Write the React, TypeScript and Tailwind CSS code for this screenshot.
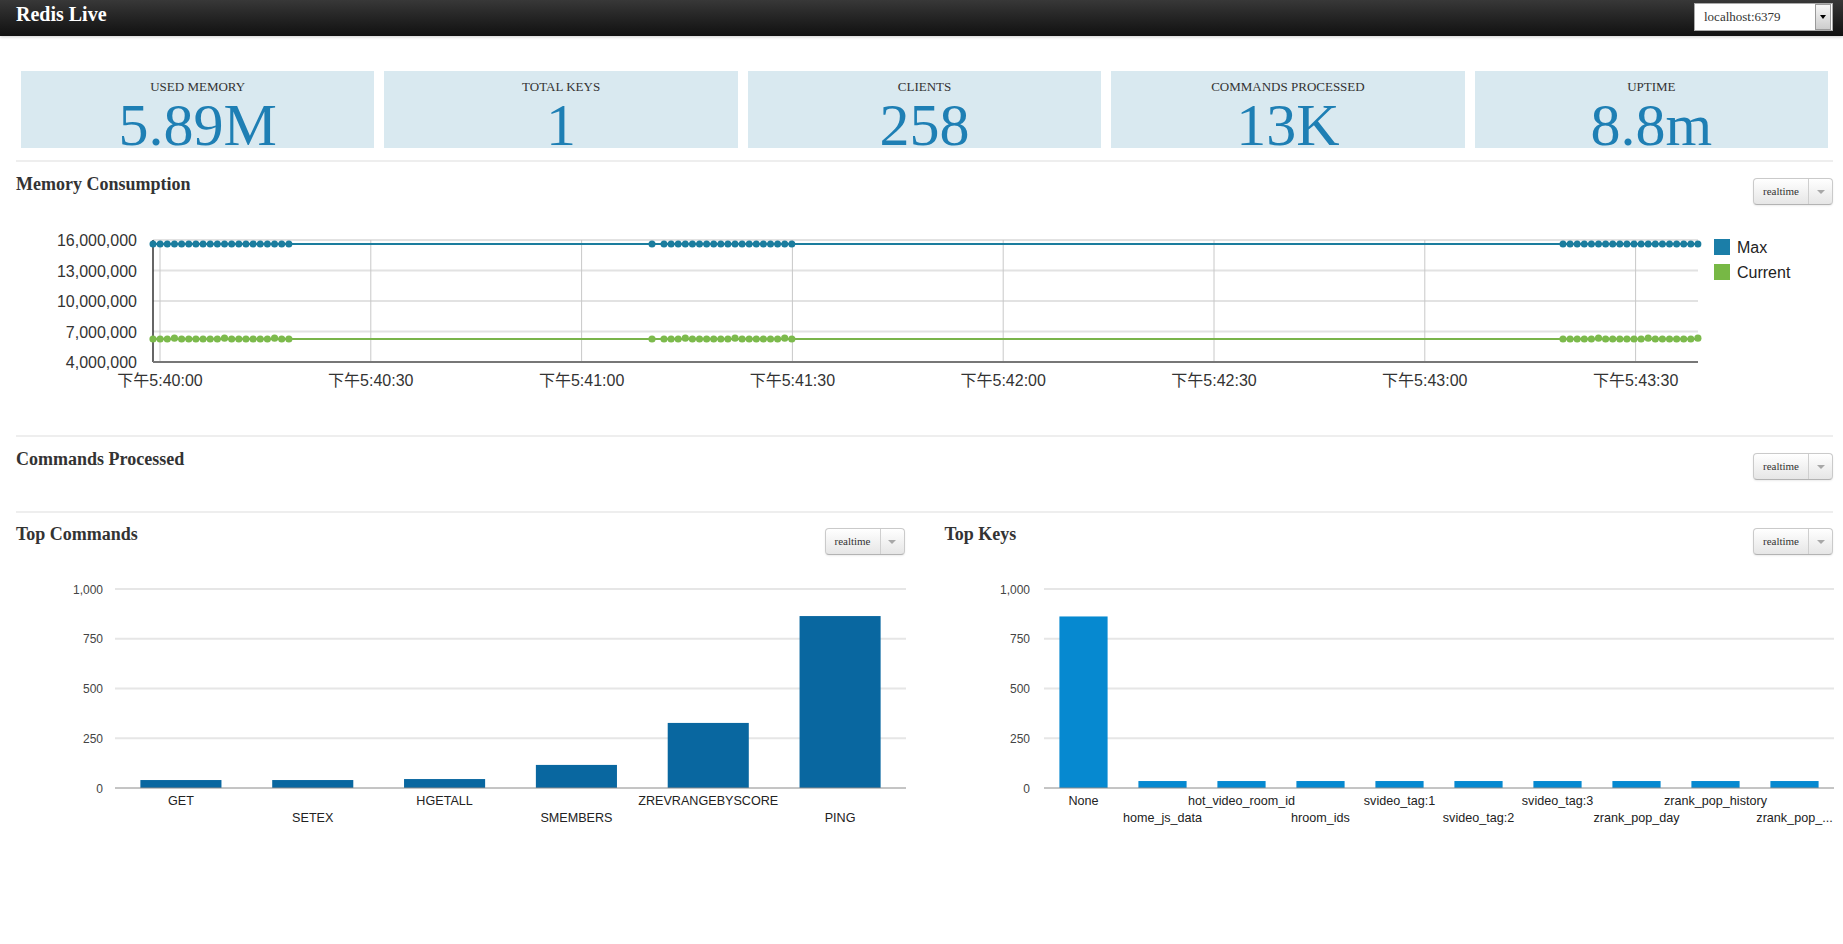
import React from "react";

function RealtimeBtn() {
  return (
    <div className="flex h-[27px] w-[80px] shrink-0 rounded-[4px] border border-[#cacaca] border-b-[#b3b3b3] bg-linear-to-b from-white to-[#e6e6e6] shadow-[0_1px_2px_rgba(0,0,0,0.08)]">
      <div className="flex w-[54px] items-center justify-center font-['Liberation_Serif',serif] text-[11px] text-[#333]">realtime</div>
      <div className="flex flex-1 items-center justify-center border-l border-[#cfcfcf]">
        <div className="h-0 w-0 border-x-[4px] border-t-[4px] border-x-transparent border-t-[#a8a8a8]" />
      </div>
    </div>
  );
}

function Stat({ label, value }: { label: string; value: string }) {
  return (
    <div className="flex h-[77px] flex-1 flex-col items-center bg-[#d9e9f0] pt-[8px]">
      <div className="text-[13px] leading-[15px] text-[#333]">{label}</div>
      <div className="mt-px text-[60px] leading-[60px] text-[#1e7fb4]">{value}</div>
    </div>
  );
}

function Rule() {
  return <div className="border-t-2 border-[#eeeeee]" />;
}

const SANS = "'Liberation Sans','Noto Sans CJK SC',sans-serif";

function LineChart() {
  const yTicks = [
    { y: 240, t: "16,000,000" },
    { y: 270.5, t: "13,000,000" },
    { y: 301, t: "10,000,000" },
    { y: 331.5, t: "7,000,000" },
    { y: 362, t: "4,000,000" },
  ];
  const xTicks = ["下午5:40:00", "下午5:40:30", "下午5:41:00", "下午5:41:30", "下午5:42:00", "下午5:42:30", "下午5:43:00", "下午5:43:30"];
  const dotsX: number[] = [];
  for (let i = 0; i < 20; i++) dotsX.push(153 + 7.15 * i);
  dotsX.push(652);
  for (let i = 0; i < 19; i++) dotsX.push(664 + 7.1 * i);
  for (let i = 0; i < 20; i++) dotsX.push(1563 + 7.1 * i);
  const curOff = (i: number) => (i % 7 === 3 ? -0.8 : 0);
  return (
    <svg width={1817} height={230} className="block overflow-visible">
      <g transform="translate(-16,-205)" fontFamily={SANS}>
        {yTicks.map((t) => (
          <g key={t.t}>
            <line x1={153} x2={1698} y1={t.y} y2={t.y} stroke="#e2e2e2" strokeWidth={2} />
            <text x={137} y={t.y + 6} textAnchor="end" fontSize={16} fill="#333">{t.t}</text>
          </g>
        ))}
        {xTicks.map((t, i) => {
          const x = 160 + 210.8 * i;
          return (
            <g key={t}>
              <line x1={x} x2={x} y1={240} y2={362} stroke="#c8c8c8" strokeWidth={1} />
              <text x={x} y={386} textAnchor="middle" fontSize={16} fill="#333">{t}</text>
            </g>
          );
        })}
        <line x1={153} x2={153} y1={240} y2={362} stroke="#333" strokeWidth={1.5} />
        <line x1={153} x2={1698} y1={362} y2={362} stroke="#777" strokeWidth={2} />
        <line x1={153} x2={1698} y1={244} y2={244} stroke="#1b7d9e" strokeWidth={2} />
        <line x1={153} x2={1698} y1={339} y2={339} stroke="#79b44a" strokeWidth={2} />
        {dotsX.map((x, i) => (
          <circle key={"m" + i} cx={x} cy={244} r={3.5} fill="#1b7d9e" />
        ))}
        {dotsX.map((x, i) => (
          <circle key={"c" + i} cx={x} cy={339 + curOff(i)} r={3.6} fill="#7cba4c" />
        ))}
        <rect x={1714} y={239} width={16} height={16} fill="#1b7ea8" />
        <text x={1737} y={253} fontSize={16} fill="#222">Max</text>
        <rect x={1714} y={264} width={16} height={16} fill="#77b845" />
        <text x={1737} y={278} fontSize={16} fill="#222">Current</text>
      </g>
    </svg>
  );
}

function BarChart({
  ox,
  axisX,
  plotL,
  plotR,
  data,
  color,
  barRatio,
}: {
  ox: number;
  axisX: number;
  plotL: number;
  plotR: number;
  data: { n: string; v: number }[];
  color: string;
  barRatio: number;
}) {
  const grid = [
    { y: 590, t: "1,000" },
    { y: 639.75, t: "750" },
    { y: 689.5, t: "500" },
    { y: 739.25, t: "250" },
  ];
  const step = (plotR - plotL) / data.length;
  const bw = step * barRatio;
  return (
    <svg width={889} height={284} className="block overflow-visible">
      <g transform={`translate(${-ox},-556)`} fontFamily={SANS}>
        {grid.map((g) => (
          <g key={g.t}>
            <line x1={plotL} x2={plotR} y1={g.y} y2={g.y} stroke="#e6e6e6" strokeWidth={2} />
            <text x={axisX} y={g.y + 4.5} textAnchor="end" fontSize={12} fill="#444">{g.t}</text>
          </g>
        ))}
        <text x={axisX} y={793.5} textAnchor="end" fontSize={12} fill="#444">0</text>
        {data.map((d, i) => {
          const cx = plotL + step * (i + 0.5);
          const h = d.v * 0.199;
          return (
            <g key={d.n}>
              <rect x={cx - bw / 2} y={789 - h} width={bw} height={h} fill={color} />
              <text x={cx} y={i % 2 === 0 ? 805.5 : 822.5} textAnchor="middle" fontSize={12.6} fill="#222">{d.n}</text>
            </g>
          );
        })}
        <line x1={plotL} x2={plotR} y1={789} y2={789} stroke="#8a8a8a" strokeWidth={1} />
      </g>
    </svg>
  );
}

export default function App() {
  const cmds = [
    { n: "GET", v: 40 },
    { n: "SETEX", v: 40 },
    { n: "HGETALL", v: 45 },
    { n: "SMEMBERS", v: 116 },
    { n: "ZREVRANGEBYSCORE", v: 327 },
    { n: "PING", v: 864 },
  ];
  const keys = [
    { n: "None", v: 862 },
    { n: "home_js_data", v: 35 },
    { n: "hot_video_room_id", v: 35 },
    { n: "hroom_ids", v: 35 },
    { n: "svideo_tag:1", v: 35 },
    { n: "svideo_tag:2", v: 35 },
    { n: "svideo_tag:3", v: 35 },
    { n: "zrank_pop_day", v: 35 },
    { n: "zrank_pop_history", v: 35 },
    { n: "zrank_pop_...", v: 35 },
  ];
  return (
    <div className="min-h-[944px] w-[1843px] bg-white font-['Liberation_Serif',serif] text-[#333]">
      <div className="flex h-[36px] items-start justify-between bg-linear-to-b from-[#383838] to-[#111111] pl-[16px] pr-[10px] shadow-[0_1px_3px_rgba(0,0,0,0.2)]">
        <div className="mt-[4px] text-[20px] font-bold leading-[20px] text-white">Redis Live</div>
        <div className="mt-[3px] flex h-[28px] w-[139px] items-center border border-[#aaa] bg-white">
          <span className="flex-1 pl-[9px] text-[13px] text-[#333]">localhost:6379</span>
          <div className="mr-px flex h-[26px] w-[16px] items-center justify-center border border-[#9a9a9a] bg-linear-to-b from-[#f6f6f6] to-[#cdcdcd]">
            <div className="h-0 w-0 border-x-[3.5px] border-t-[4px] border-x-transparent border-t-black" />
          </div>
        </div>
      </div>

      <div className="pl-[16px] pr-[10px]">
        <div className="mt-[35px] flex gap-[10px] px-[5px]">
          <Stat label="USED MEMORY" value="5.89M" />
          <Stat label="TOTAL KEYS" value="1" />
          <Stat label="CLIENTS" value="258" />
          <Stat label="COMMANDS PROCESSED" value="13K" />
          <Stat label="UPTIME" value="8.8m" />
        </div>

        <div className="mt-[12px]">
          <Rule />
        </div>

        <div className="h-[273px]">
          <div className="flex items-start justify-between pt-[12px]">
            <div className="text-[18px] font-bold leading-[20px] text-[#333]">Memory Consumption</div>
            <div className="mt-[4px]">
              <RealtimeBtn />
            </div>
          </div>
          <LineChart />
        </div>

        <Rule />

        <div className="h-[74px]">
          <div className="flex items-start justify-between pt-[12px]">
            <div className="text-[18px] font-bold leading-[20px] text-[#333]">Commands Processed</div>
            <div className="mt-[4px]">
              <RealtimeBtn />
            </div>
          </div>
        </div>

        <Rule />

        <div className="grid grid-cols-2 gap-[40px]">
          <div>
            <div className="flex h-[42px] items-start justify-between pt-[11px]">
              <div className="text-[18px] font-bold leading-[20px] text-[#333]">Top Commands</div>
              <div className="mt-[4px]">
                <RealtimeBtn />
              </div>
            </div>
            <BarChart ox={16} axisX={103} plotL={115} plotR={906} data={cmds} color="#0967a0" barRatio={0.615} />
          </div>
          <div>
            <div className="flex h-[42px] items-start justify-between pt-[11px]">
              <div className="text-[18px] font-bold leading-[20px] text-[#333]">Top Keys</div>
              <div className="mt-[4px]">
                <RealtimeBtn />
              </div>
            </div>
            <BarChart ox={945} axisX={1030} plotL={1044} plotR={1834} data={keys} color="#0689d0" barRatio={0.61} />
          </div>
        </div>
      </div>
    </div>
  );
}
